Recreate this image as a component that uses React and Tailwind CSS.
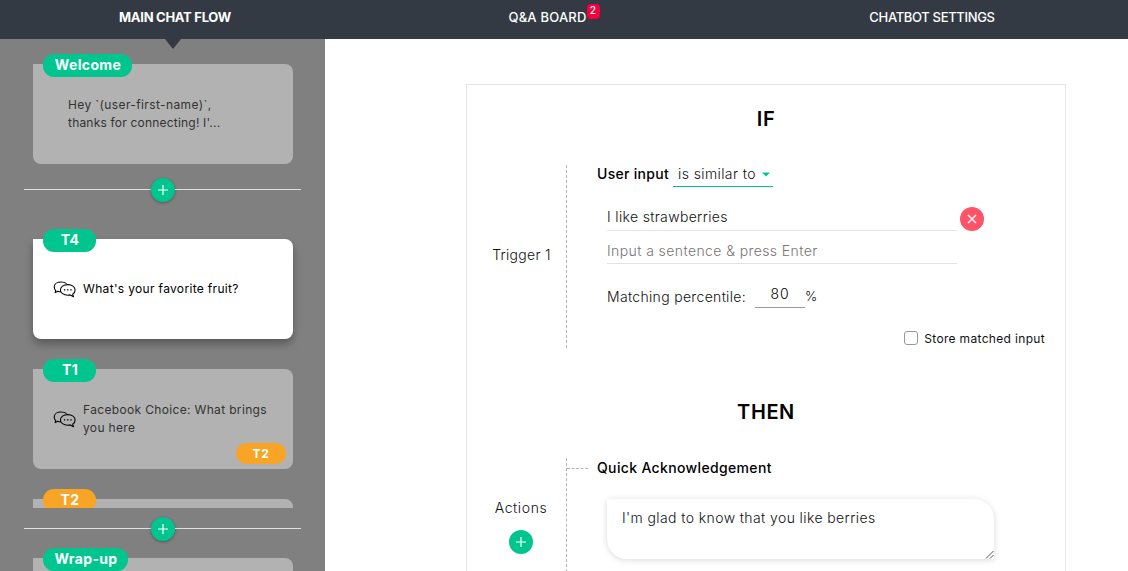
import clsx from 'clsx';

function Pill({ children, className }) {
  return (
    <span
      className={clsx(
        'absolute -top-2.5 left-2.5 flex h-[23px] items-center justify-center rounded-[11px] pb-0.5 pl-px text-sm leading-5 font-bold tracking-[0.35px] text-white',
        className,
      )}
    >
      {children}
    </span>
  );
}

function PlusCircle({ className }) {
  return (
    <button className={clsx('flex size-6 items-center justify-center rounded-full bg-[#00c58e]', className)}>
      <svg width="12" height="12" viewBox="0 0 12 12" fill="none" stroke="#fff" strokeWidth="1.2">
        <path d="M6 1v10M1 6h10" />
      </svg>
    </button>
  );
}

function Divider({ className }) {
  return (
    <div className={clsx('ml-6 flex h-6 w-[277px] items-center', className)}>
      <span className="-mt-px h-px w-[127px] bg-[#dedede]" />
      <PlusCircle className="shadow-[0_1px_3px_rgba(0,0,0,0.35)]" />
      <span className="-mt-px h-px flex-1 bg-[#dedede]" />
    </div>
  );
}

function ChatIcon() {
  return (
    <svg className="shrink-0" width="23" height="17" viewBox="0 0 23 17" fill="none" stroke="currentColor" strokeWidth="1.1" strokeLinejoin="round">
      <path d="M13.6 2.6C12.2 1.5 10.2 1 8 1 4.1 1 1.2 3 1.2 6c0 1.5.6 2.6 1.5 3.6l-.5 2 2.6-1.3c.8.4 1.8.6 2.8.6" />
      <path d="M14.8 3.6c4.2 0 7.3 2.3 7.3 5.3 0 1.8-.9 3.3-2.4 4.2l.8 2.6-3.2-1.8c-.8.2-1.6.3-2.5.3-4.2 0-7.4-2.3-7.4-5.3s3.2-5.3 7.4-5.3Z" />
      <path d="M10.9 8.8h1.4M14.1 8.8h1.4M17.3 8.8h1.4" strokeWidth="1.3" />
    </svg>
  );
}

function Card({ className, children }) {
  return (
    <div className={clsx('relative ml-[33px] h-[100px] w-[260px] rounded-lg rounded-tl-none text-xs leading-[18px]', className)}>
      {children}
    </div>
  );
}

function Sidebar() {
  return (
    <aside className="relative h-[532px] w-[325px] shrink-0 overflow-hidden bg-[#808080] pt-[25px]">
      <svg className="absolute top-0 left-[165px]" width="16" height="10" viewBox="0 0 16 10">
        <path d="M0 0h16L8 10Z" fill="#343a43" />
      </svg>
      <Card className="bg-[#b2b2b2] pt-8 pl-[35px] text-[#333]">
        <Pill className="w-[89px] bg-[#00c58e]">Welcome</Pill>
        <p className="whitespace-nowrap tracking-[0.38px]">Hey `(user-first-name)`,</p>
        <p className="whitespace-nowrap tracking-[0.2px]">thanks for connecting! I'...</p>
      </Card>
      <Divider className="mt-3.5" />
      <div className="h-[306px] overflow-hidden pt-[37px]">
        <Card className="flex items-center bg-white pl-5 text-black shadow-[0_5px_8px_rgba(0,0,0,0.3)]">
          <Pill className="w-[53px] bg-[#00c58e]">T4</Pill>
          <ChatIcon />
          <p className="ml-[7px] tracking-[0.33px] whitespace-nowrap">What's your favorite fruit?</p>
        </Card>
        <Card className="mt-[30px] flex items-center bg-[#b2b2b2] pl-5 text-[#333]">
          <Pill className="w-[53px] bg-[#00c58e]">T1</Pill>
          <span className="text-black">
            <ChatIcon />
          </span>
          <p className="ml-[7px] tracking-[0.34px] whitespace-nowrap">
            Facebook Choice: What brings
            <br />
            you here
          </p>
          <span className="absolute right-[7px] bottom-[5px] flex h-[21px] w-[50px] items-center justify-center rounded-[10px] bg-[#f8a427] text-xs font-bold tracking-[0.6px] text-white">
            T2
          </span>
        </Card>
        <Card className="mt-[30px] bg-[#b2b2b2]">
          <Pill className="w-[53px] bg-[#f8a427]">T2</Pill>
        </Card>
      </div>
      <Divider className="mt-[9px]" />
      <Card className="mt-[17px] bg-[#b2b2b2]">
        <Pill className="w-[85px] bg-[#00c58e]">Wrap-up</Pill>
      </Card>
    </aside>
  );
}

function Rule() {
  return (
    <section className="ml-[141px] mt-[45px] h-[600px] w-[600px] border border-[#e6e6e6] text-sm font-light text-[#111]">
      <h2 className="h-20 pt-5 text-center text-xl leading-7 font-semibold tracking-[0.7px] text-black">IF</h2>
      <div className="flex h-[183px]">
        <div className="flex w-[99px] items-center justify-center pl-2.5 tracking-[0.3px]">
          <span className="-mt-1">Trigger 1</span>
        </div>
        <div className="flex-1 border-l border-dashed border-[#b5b5b5] pl-[30px]">
          <div className="flex h-[22px] items-start">
            <span className="w-[76px] leading-[18px] font-medium tracking-[0.3px] text-black">User input</span>
            <span className="flex h-[22px] w-[100px] items-start border-b border-[#00c58e] pl-[5px] leading-[18px] tracking-[0.4px] whitespace-nowrap">
              is similar to
              <svg className="mt-[7px] ml-1.5" width="8" height="5" viewBox="0 0 8 5">
                <path d="M0 .5h8L4 4.5Z" fill="#00c58e" />
              </svg>
            </span>
          </div>
          <div className="flex h-11 pl-2.5">
            <div className="flex h-11 w-[350px] items-end border-b border-[#e3e3e3] pb-1 leading-[19px] tracking-[0.34px]">
              I like strawberries
            </div>
            <button className="mt-5 ml-[3px] flex size-6 items-center justify-center rounded-full bg-[#ff5468]">
              <svg width="10" height="10" viewBox="0 0 10 10" fill="none" stroke="#fff" strokeWidth="1.4">
                <path d="m1 1 8 8M9 1 1 9" />
              </svg>
            </button>
          </div>
          <div className="ml-2.5 flex h-[33px] w-[350px] items-end border-b border-[#e3e3e3] pb-[3px] leading-[19px] tracking-[0.41px] text-[#757575]">
            Input a sentence &amp; press Enter
          </div>
          <div className="mt-5 flex h-6 items-start pl-2.5">
            <span className="w-[148px] pt-[3px] leading-[19px] tracking-[0.32px]">Matching percentile:</span>
            <span className="h-6 w-[50px] border-b border-[#999] text-center leading-[19px] tracking-[0.8px] text-black">80</span>
            <span className="pt-[3px] text-[13px] leading-[19px]">%</span>
          </div>
          <label className="mt-[22px] mr-5 flex h-[18px] items-center justify-end gap-1.5 text-xs font-normal tracking-[0.33px]">
            <span className="-mt-0.5 size-3.5 rounded-[3px] border border-[#999] bg-white" />
            Store matched input
          </label>
        </div>
      </div>
      <h2 className="h-[110px] pt-[50px] text-center text-xl leading-7 font-semibold tracking-[0.6px] text-black">THEN</h2>
      <div className="flex h-[200px]">
        <div className="flex w-[99px] flex-col items-center pt-10 pl-[9px] tracking-[0.6px]">
          <span className="leading-5">Actions</span>
          <PlusCircle className="mt-3" />
        </div>
        <div className="flex-1 border-l border-dashed border-[#b5b5b5]">
          <div className="flex h-5 items-center">
            <span className="mt-px w-[21px] border-t border-dashed border-[#b5b5b5]" />
            <span className="ml-[9px] font-medium tracking-[0.35px] text-black">Quick Acknowledgement</span>
          </div>
          <div className="mt-[21px] ml-10 flex h-[60px] w-[387px] items-end justify-between rounded-tr-[20px] rounded-bl-[20px] bg-white pl-[15px] shadow-[0_1px_6px_rgba(0,0,0,0.15)]">
            <p className="self-start pt-[9px] leading-5 tracking-[0.4px]">I'm glad to know that you like berries</p>
            <svg width="9" height="9" viewBox="0 0 9 9" stroke="#555" strokeWidth="1">
              <path d="M1 8.5 8.5 1M5 8.5 8.5 5" />
            </svg>
          </div>
        </div>
      </div>
    </section>
  );
}

export default function App() {
  return (
    <div className="h-[571px] w-[1128px] overflow-hidden bg-white font-['Inter',sans-serif]">
      <header className="flex h-[39px] bg-[#343a43] pt-2 text-[13px] leading-[19px] text-white">
        <div className="w-[350px] text-center font-bold tracking-[-0.28px]">MAIN CHAT FLOW</div>
        <div className="flex w-[407px] justify-center pl-px font-medium tracking-[0.2px]">
          Q&amp;A BOARD
          <span className="-mt-1 flex h-[15px] w-[13px] items-center justify-center rounded bg-[#f5003d] pb-1 text-[10px] leading-none">
            2
          </span>
        </div>
        <div className="w-[350px] text-center font-medium tracking-[-0.33px]">CHATBOT SETTINGS</div>
      </header>
      <div className="flex">
        <Sidebar />
        <main className="flex-1">
          <Rule />
        </main>
      </div>
    </div>
  );
}
